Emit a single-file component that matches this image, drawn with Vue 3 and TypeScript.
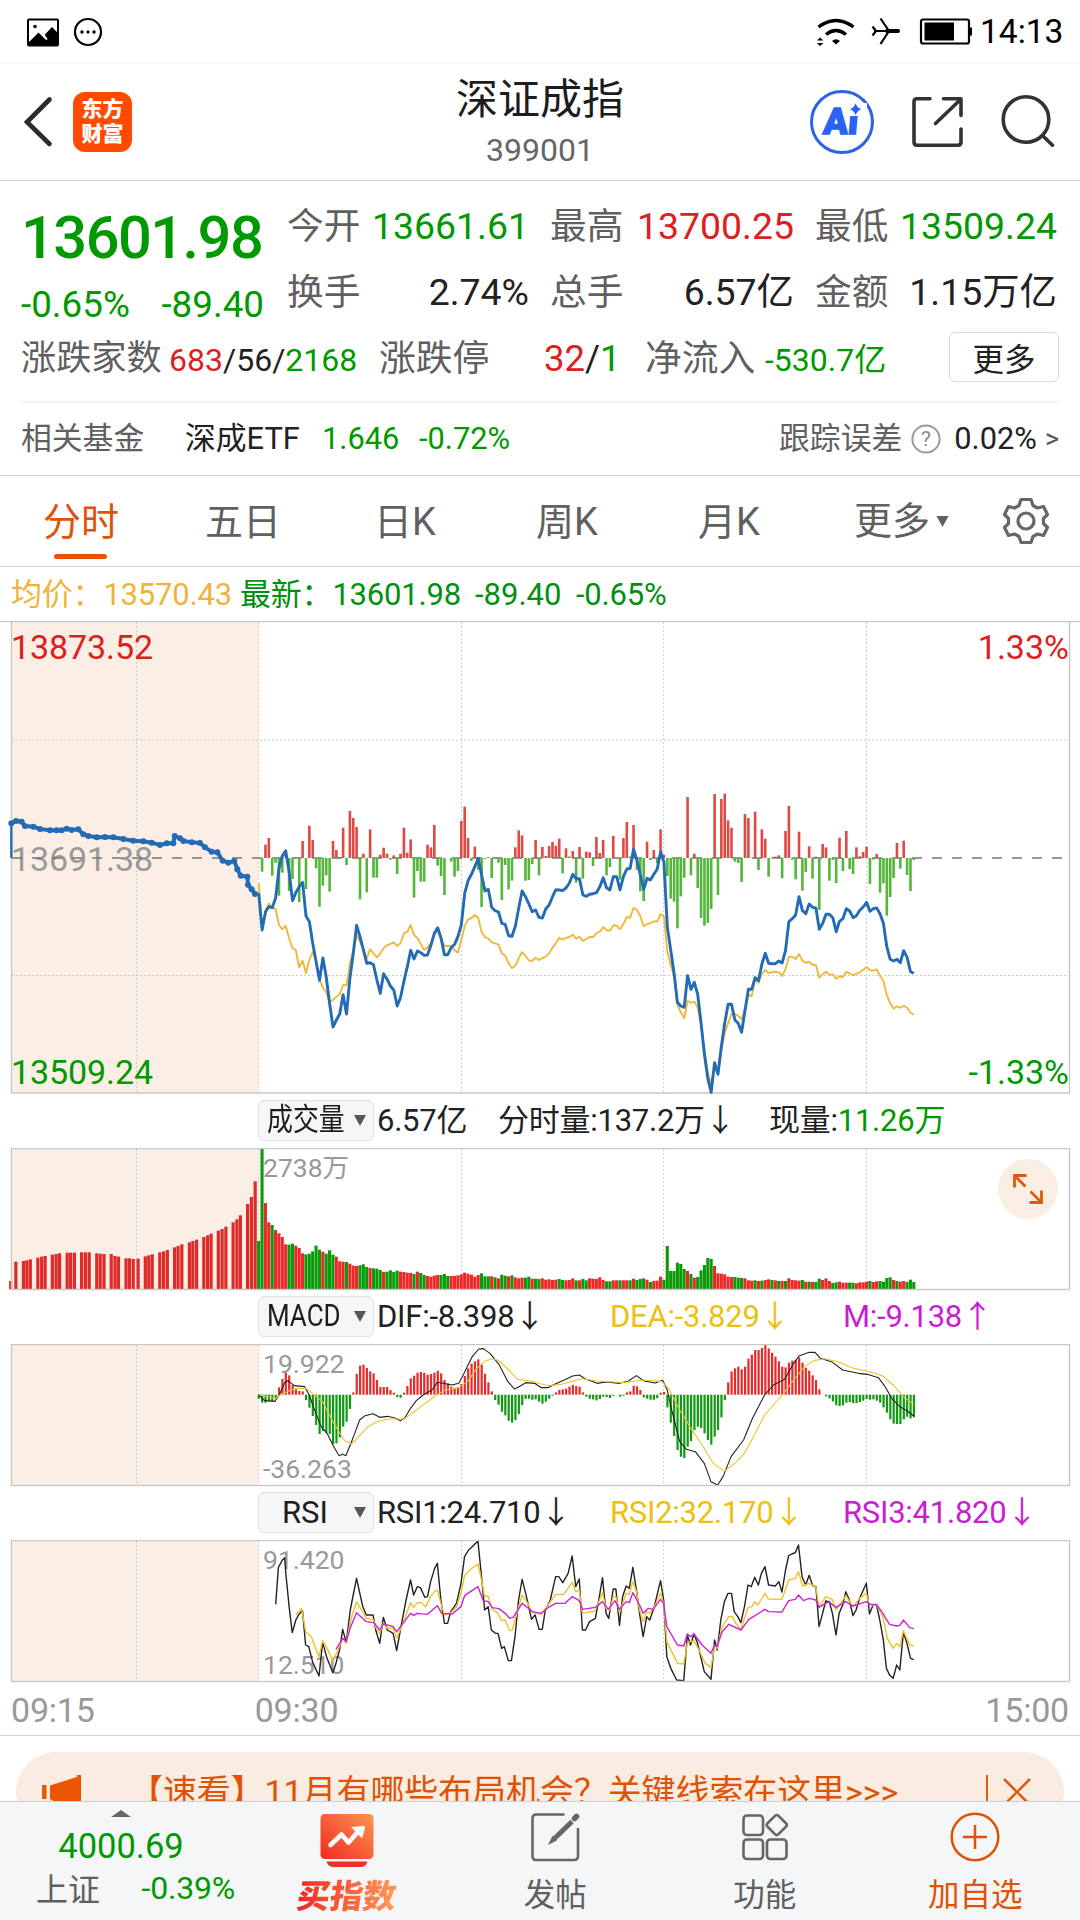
<script setup lang="ts">
interface Stat { label: string; value: string; tone: string }
interface Bar { x: number; y: number; h: number; tone: string }

const stats: Stat[] = [
  { label: '今开', value: '13661.61', tone: 'down' },
  { label: '最高', value: '13700.25', tone: 'up' },
  { label: '最低', value: '13509.24', tone: 'down' },
  { label: '换手', value: '2.74%', tone: 'ink' },
  { label: '总手', value: '6.57亿', tone: 'ink' },
  { label: '金额', value: '1.15万亿', tone: 'ink' },
]
const tabs = ['分时', '五日', '日K', '周K', '月K']

// One trading minute is STEP px wide; the session opens at OPEN_X.
const OPEN_X = 258.7
const STEP = 3.377
const gridX = [136.5, 258.7, 461.4, 663.6, 866.4]
const minuteX = (i: number): number => OPEN_X + i * STEP
const nums = (s: string): number[] => s.trim().split(/\s+/).map(Number)

// Price curves, in thirds of a pixel below y = 760.
const price = nums(`400 510 455 440 443 415 325 288 272 335 422 398 380 367 468 485 550 605 661 594
650 730 801 780 762 704 762 655 580 496 530 570 610 608 614 660 700 641 657 678
690 738 713 664 620 571 597 573 578 586 585 556 520 503 535 584 584 563 553 530
495 400 362 343 320 295 345 393 388 442 452 456 490 493 527 529 498 445 393 410
432 455 450 472 474 447 435 410 389 390 392 384 369 343 356 356 405 409 403 401
398 380 353 383 390 350 350 390 350 327 325 268 300 345 388 355 360 343 328 275
305 500 570 640 727 738 742 647 688 667 703 790 885 955 997 908 943 860 790 733
733 780 790 817 752 688 688 653 662 612 580 610 611 611 603 609 572 485 476 465
410 452 461 432 442 444 508 490 463 463 473 515 484 476 446 453 473 467 451 441
427 454 446 444 462 490 560 598 603 598 608 572 592 635 640`)
const average = nums(`368 505 455 431 443 447 495 508 497 535 565 570 622 602 640 598 577 600 660 683
697 725 720 710 703 675 676 610 570 525 545 568 595 568 580 592 580 565 556 552
547 558 550 520 515 495 525 534 552 570 562 550 525 510 535 558 558 558 570 578
540 498 478 474 465 474 515 532 535 547 550 554 580 587 610 624 617 595 576 588
601 603 593 600 594 590 580 563 550 533 539 534 531 524 536 530 543 537 531 531
520 515 502 510 512 496 497 508 492 471 473 443 450 468 499 493 489 484 485 462
470 575 615 650 735 757 775 722 728 725 742 800 870 940 970 915 940 870 820 790
762 762 767 778 745 705 708 660 668 642 630 639 637 635 637 648 628 590 590 597
582 602 608 606 614 615 653 643 635 644 643 656 649 651 635 640 646 641 637 629
621 630 632 628 648 662 705 730 746 739 743 737 743 758 764`)
const toLine = (ys: number[]): string =>
  ys.map((y, i) => `${minuteX(i).toFixed(1)},${(760 + y / 3).toFixed(1)}`).join(' ')
const priceLine = toLine(price)
const averageLine = toLine(average)

const auction = '34,190 48,183 65,185 75,198 100,200 120,207 150,211 170,211 185,211 200,206 215,210 235,208 250,223 265,228 290,232 315,231 340,232 370,237 400,242 430,244 455,248 480,255 500,250 520,250 524,228 540,235 550,243 575,247 600,249 615,262 635,275 652,277 668,302 685,308 703,303 712,328 722,347 742,350 744,374 755,388 765,402'
const auctionDots = auction.split(' ').map(p => p.split(',').map(Number))

// Bars around a zero line: heights above (+) and below (−), thirds of a pixel.
const breadth = nums(`0 -41 40 60 -53 -14 -113 -44 20 -99 -63 2 -132 51 -93 97 54 -31 -146 -83
-52 -101 51 24 3 91 -21 141 120 93 -124 13 -103 86 -59 -59 10 31 13 -5
8 -48 13 91 16 56 -119 -39 -71 -71 40 32 99 -23 -54 -111 0 -11 -56 -39
111 154 60 -9 34 -35 -147 -3 2 -60 0 -14 -126 -21 -94 -68 32 83 68 -68
-66 -18 54 -52 33 6 36 48 37 58 -46 29 4 21 -74 33 -62 19 17 -24
63 15 54 -52 -27 66 0 -65 60 108 4 99 -36 -100 -129 49 -6 24 -16 86
10 -54 -122 -131 -211 -115 -59 183 -52 13 -90 -180 -203 -195 -153 192 -111 177 193 113
91 -11 -15 -72 132 120 1 139 -36 86 58 -56 2 4 8 -61 81 156 -5 -64
79 -98 -42 35 -62 4 -156 42 32 -68 -6 -75 61 -39 81 -33 -48 32 5 18
34 -78 -5 12 -104 -76 -173 -117 -60 45 -32 52 -51 -99 -6`)
const signedBars = (vals: number[], zero: number): Bar[] =>
  vals.map((v, i) => ({
    x: minuteX(i), y: v > 0 ? zero - v / 3 : zero, h: Math.abs(v) / 3, tone: v > 0 ? 'r' : 'g',
  }))
const breadthBars = signedBars(breadth, 858)

// Volume: "<offset><tone>" per minute, offset measured from the top of the pane.
const volume = `453g 177g 339r 397r 405g 420r 430r 441r 463r 464g 461g 467r 474r 490r 493g 491g 484g 467g 479g 485r
491g 481g 494g 500r 514r 515r 516g 521r 527r 528r 526g 523g 531g 534r 535g 536g 540g 546r 545g 541g
546g 542g 545r 546r 548r 549r 552g 545r 549g 555g 558r 560r 557r 555r 555g 552g 558g 558r 558r 556r
553r 548r 551r 554r 560r 555r 550g 559g 559g 559r 562g 565r 554g 557g 559r 556g 562r 565r 563r 563g
560g 566r 566g 567g 565r 569r 568r 570r 569r 567g 570g 571r 570r 565r 571g 571r 567g 571g 565r 566r
567r 562r 570r 574g 574g 571r 571r 571g 571r 571r 571g 566r 570g 567g 565g 569r 576g 573r 572r 560r
569g 468g 543g 543g 518g 522g 537g 543r 552g 563r 561g 541g 525g 504g 507g 528r 550r 551r 553r 560r
561r 561g 563g 564g 565r 571r 572r 571g 573r 572g 570r 568r 570g 571r 573g 573r 573g 565r 570r 571r
572r 570g 575r 575g 576r 576g 566g 570r 565r 573r 579g 577g 575r 578r 578r 578g 578g 580r 577r 577r
575r 573g 576r 574r 573g 575g 564g 562g 570r 573g 575r 573r 576g 569g 576g`
const volumeBars: Bar[] = volume.split(/\s+/).map((t, i) => {
  const v = parseInt(t, 10)
  return { x: minuteX(i), y: 1090 + v / 3, h: (598 - v) / 3, tone: t.slice(-1) }
})
const preVolume = '31,573 46,515 68,513 78,511 88,508 110,503 121,500 131,498 152,494 163,492 173,490 195,488 205,488 216,488 237,487 248,487 259,487 281,490 291,491 302,492 323,492 334,498 344,500 366,505 376,505 387,507 401,506 422,499 432,496 442,493 464,487 475,484 486,480 507,472 517,468 528,463 550,457 560,453 571,449 592,441 603,436 613,431 634,422 645,417 656,410 677,397 688,388 698,376 719,342 730,321 741,274'
const preBars: Bar[] = preVolume.split(' ').map(p => {
  const [x, v] = p.split(',').map(Number)
  return { x: x / 2.904, y: 1090 + v / 3, h: (598 - v) / 3, tone: 'r' }
})

const macd = nums(`-12 -24 -24 -19 -19 -11 22 47 66 58 29 16 11 10 -16 -39 -64 -91 -118 -109
-114 -118 -148 -146 -128 -96 -81 -43 7 62 87 90 80 70 64 44 23 23 23 14
6 -7 -9 6 26 49 57 66 68 66 60 62 66 72 64 44 34 24 19 22
32 56 79 93 100 106 90 63 37 10 -16 -30 -51 -62 -78 -84 -76 -58 -31 -13
-12 -15 -14 -21 -27 -21 -12 -3 7 14 16 18 24 29 26 24 7 -6 -12 -14
-17 -13 -6 -7 -10 -3 0 -6 -3 7 10 27 25 14 -8 -12 -15 -15 -10 6
8 -38 -84 -124 -166 -186 -190 -156 -139 -106 -96 -100 -116 -136 -150 -126 -106 -68 -16 37
70 79 84 76 84 108 120 134 134 140 150 139 126 114 100 84 82 96 102 104
112 96 81 72 58 44 16 0 -5 -11 -20 -32 -34 -32 -24 -22 -25 -25 -22 -18
-13 -15 -14 -18 -24 -38 -54 -74 -87 -88 -88 -74 -66 -71 -68`)
const macdBars = signedBars(macd, 1394.7)

const dif = '42,194 55,212 78,214 88,195 100,158 107,152 122,167 145,170 155,195 170,250 182,290 195,310 210,350 222,377 230,373 237,377 247,345 257,310 268,270 280,257 298,251 313,262 330,259 345,263 360,272 370,262 382,235 395,212 410,195 430,180 442,157 455,160 475,165 490,160 500,135 520,80 535,57 545,56 560,70 580,103 600,155 615,177 625,170 640,158 660,160 675,173 690,173 705,163 730,148 745,138 760,135 775,148 800,160 820,156 850,160 870,153 888,137 905,153 930,159 947,151 957,180 967,240 985,335 1000,358 1020,365 1040,400 1055,455 1070,465 1082,440 1100,380 1128,330 1148,265 1175,195 1195,165 1220,148 1240,100 1252,78 1275,67 1288,67 1300,85 1325,95 1350,120 1385,130 1405,133 1430,143 1445,170 1460,205 1478,230 1495,243 1509,258'
const dea = '42,194 80,206 90,195 110,182 128,175 148,175 165,193 185,215 210,280 235,333 250,342 262,325 285,292 305,276 330,267 368,267 385,250 410,225 440,195 460,180 490,173 510,155 530,115 550,92 565,87 578,90 600,117 622,148 650,153 690,167 720,163 765,146 800,153 860,158 905,150 945,155 960,175 985,240 1010,295 1035,345 1060,400 1085,424 1110,398 1130,370 1150,320 1175,255 1215,195 1240,150 1265,110 1285,92 1310,86 1340,95 1370,113 1410,125 1440,138 1465,168 1490,205 1509,222'
const rsi1 = '80,823 86,712 95,690 100,683 103,735 110,830 117,908 125,870 132,853 140,842 147,945 154,950 163,998 177,1038 185,937 195,985 208,1028 215,1000 223,960 230,898 238,938 247,840 261,745 275,830 283,855 298,855 304,900 313,940 321,862 330,900 343,910 351,962 362,880 372,810 382,750 389,795 397,770 404,773 414,802 420,800 427,755 436,715 442,700 450,810 458,880 465,880 472,845 485,820 495,760 503,680 512,660 520,650 533,633 541,740 548,840 556,830 563,900 572,910 578,910 586,955 592,950 601,992 608,992 616,920 624,810 632,748 640,790 653,868 661,855 670,898 677,898 684,840 695,810 707,740 714,740 723,758 735,730 744,678 752,770 760,747 767,900 774,900 783,875 796,865 805,800 812,743 820,850 826,865 836,777 842,777 850,886 857,800 865,768 872,775 880,712 888,780 895,850 903,920 911,860 918,870 928,830 942,752 949,810 956,980 965,1015 978,1050 994,1052 1002,915 1009,945 1017,912 1025,940 1040,1025 1055,1048 1063,930 1069,960 1077,870 1085,815 1093,790 1101,790 1107,845 1115,860 1122,878 1130,830 1138,765 1145,770 1153,742 1161,765 1168,730 1176,710 1184,765 1199,768 1207,755 1214,786 1222,720 1229,677 1236,672 1244,668 1251,645 1259,740 1267,765 1275,736 1283,768 1290,770 1297,890 1305,850 1312,813 1320,815 1327,850 1335,915 1342,850 1350,825 1357,785 1365,810 1373,857 1380,840 1388,805 1403,760 1410,852 1418,825 1426,825 1433,870 1441,930 1448,1015 1455,1035 1463,1045 1471,1005 1478,1020 1486,907 1494,940 1502,985 1509,989'
const rsi2 = '125,855 138,835 147,905 160,920 168,950 177,980 185,932 195,955 208,992 218,965 230,925 238,940 248,870 261,815 270,835 283,865 298,868 305,895 313,910 321,880 330,895 343,895 351,925 365,880 382,818 389,832 397,818 406,818 416,830 427,800 436,785 442,780 450,820 458,855 472,848 485,830 495,790 503,737 515,720 533,702 541,750 548,800 556,798 565,838 578,850 586,872 594,870 604,902 610,900 618,860 632,795 642,815 655,848 675,852 690,825 707,793 725,793 744,757 752,785 760,780 767,850 795,843 812,788 820,835 828,840 836,800 842,800 850,848 865,790 872,793 880,755 888,785 895,840 903,875 911,845 918,850 930,825 942,790 949,820 956,935 980,1000 994,1002 1002,940 1009,935 1017,932 1030,965 1042,1000 1055,1012 1063,950 1069,955 1080,890 1095,860 1103,860 1110,880 1122,898 1138,833 1147,830 1153,815 1160,825 1176,790 1184,807 1214,808 1229,750 1244,745 1251,725 1260,768 1275,760 1290,772 1297,832 1312,800 1327,808 1335,840 1357,797 1373,830 1388,805 1403,790 1410,825 1426,825 1440,860 1450,925 1463,955 1471,940 1478,950 1486,902 1500,945 1509,948'
const rsi3 = '215,958 230,925 238,935 248,890 261,848 283,875 300,878 313,900 321,882 343,890 351,905 365,880 382,850 389,856 397,850 420,853 442,827 452,850 475,852 495,830 503,797 533,770 545,812 556,815 565,833 580,836 594,850 604,865 612,862 632,820 655,845 675,850 690,833 707,820 728,820 744,800 760,812 767,838 796,832 812,815 825,838 840,812 850,838 865,815 872,818 880,788 895,825 903,850 915,835 925,838 942,808 949,820 956,890 980,945 994,948 1002,912 1009,920 1017,912 1035,945 1055,970 1063,945 1069,948 1080,905 1095,883 1122,900 1140,868 1176,838 1184,845 1214,846 1229,812 1244,808 1251,795 1262,812 1275,805 1290,810 1297,832 1318,815 1335,832 1357,815 1373,828 1403,815 1412,823 1426,823 1440,850 1455,883 1470,888 1478,886 1486,870 1500,893 1509,896'
const studySpace = 'translate(240 1330) scale(0.44643 0.33333)'
</script>

<template>
  <div class="page">
    <header class="status">
      <svg class="st-left" width="80" height="36" viewBox="24 14 80 36">
        <rect x="28" y="19.5" width="30" height="26" rx="1" fill="none" stroke="#000" stroke-width="2" />
        <circle cx="35" cy="26.5" r="1.8" />
        <path d="M28 45V43L38.500 32.500L46 40L44.500 35L52 27L58 33V45Z" />
        <path d="M43.500 34.500L47 39.500" stroke="#fff" stroke-width="1.600" />
        <circle cx="88" cy="32" r="13" fill="none" stroke="#000" stroke-width="2.2" />
        <circle cx="82" cy="32" r="1.700" /><circle cx="88" cy="32" r="1.700" /><circle cx="94" cy="32" r="1.700" />
      </svg>
      <svg class="st-right" width="160" height="36" viewBox="814 14 160 36">
        <g fill="none" stroke="#000" stroke-width="3.400">
          <path d="M818.500 27Q836 14 853.500 27" /><path d="M826 34.500Q836 26.500 846 34.500" />
        </g>
        <path d="M832 41Q836 37.500 840 41L836 44.500Z" />
        <path d="M817 40.500L820 37.500L823.500 40.500ZM817 43L820 46L823.500 43Z" />
        <path d="M880.500 18.500L889 31L880.500 44M874 31H889M872.500 26.500L876 31L872.500 35.500" fill="none" stroke="#000" stroke-width="2.200" />
        <path d="M887 31H898" fill="none" stroke="#000" stroke-width="4" stroke-linecap="round" />
        <rect x="921" y="19.500" width="48" height="24" rx="2" fill="none" stroke="#000" stroke-width="2.200" />
        <rect x="924.500" y="22.500" width="29.500" height="18" /><rect x="969" y="27.500" width="3" height="8" />
      </svg>
      <span class="clock">14:13</span>
    </header>

    <div class="titlebar">
      <svg class="back" width="32" height="52" viewBox="22 96 32 52"><path d="M49.500 99.500L27 122L49.500 144" fill="none" stroke="#2b2b2b" stroke-width="4.600" stroke-linecap="round" /></svg>
      <div class="logo"><span>东方</span><span>财富</span></div>
      <div class="title"><b>深证成指</b><small>399001</small></div>
      <svg class="tools" width="260" height="68" viewBox="806 88 260 68">
        <circle cx="842" cy="122" r="30.500" fill="#fff" stroke="#2e61e8" stroke-width="3" />
        <g transform="translate(822.500 134) skewX(-5)">
          <text class="ai" x="0" y="0">Ai</text>
        </g>
        <rect x="847" y="103" width="20" height="13" fill="#fff" />
        <path d="M855.600 103.200Q857 107.800 861.200 109.200Q857 110.600 855.600 115.200Q854.200 110.600 850 109.200Q854.200 107.800 855.600 103.200Z" fill="#2b62f5" />
        <g fill="none" stroke="#333" stroke-width="3.600" stroke-linecap="round" stroke-linejoin="round">
          <path d="M930 98.800H917Q914 98.800 914 102V142Q914 145.200 917 145.200H958Q961 145.200 961 142V129" />
          <path d="M943.500 98.800H961V115.500M960 100L935.500 123.500" />
          <circle cx="1026" cy="119.500" r="22.800" /><path d="M1043 136L1052.500 145.200" />
        </g>
      </svg>
    </div>

    <section class="quote">
      <div class="q-top">
        <div class="q-main">
          <div class="last">13601.98</div>
          <div class="chg"><span>-0.65%</span><span>-89.40</span></div>
        </div>
        <div class="q-grid">
          <div v-for="s in stats" :key="s.label" class="cell"><label>{{ s.label }}</label><span :class="s.tone">{{ s.value }}</span></div>
        </div>
      </div>
      <div class="q-row">
        <label class="w1">涨跌家数</label>
        <span class="w2"><i class="up">683</i>/56/<i class="down">2168</i></span>
        <label class="w3">涨跌停</label>
        <span class="w4"><i class="up">32</i>/<i class="down">1</i></span>
        <label class="w5">净流入</label>
        <span class="w6 down">-530.7亿</span>
        <button>更多</button>
      </div>
      <div class="funds">
        <span class="f1">相关基金</span><span class="f2">深成ETF</span><span class="f3">1.646</span><span class="f4">-0.72%</span>
        <span class="f5">跟踪误差</span>
        <svg width="30" height="30" viewBox="0 0 30 30"><circle cx="15" cy="15" r="13.600" fill="none" stroke="#999" stroke-width="2" /><text x="15" y="22" text-anchor="middle" class="q">?</text></svg>
        <span class="f6">0.02%</span><span class="f7">&gt;</span>
      </div>
    </section>

    <nav class="tabs">
      <div v-for="(t, i) in tabs" :key="t" class="tab" :class="{ on: i === 0 }">{{ t }}</div>
      <div class="tab more">更多<svg width="13" height="13" viewBox="0 0 13 13"><path d="M0.500 1H12.500L6.500 12Z" fill="#606060" /></svg></div>
      <svg class="gear" width="52" height="52" viewBox="-26 -26 52 52" fill="none" stroke="#666" stroke-width="3.200" stroke-linejoin="round">
        <path d="M-5 -21.500H5L7 -15.500L11.500 -13L17.500 -14.500L21.500 -6.500L17.500 -2.500V2.500L21.500 6.500L17.500 14.500L11.500 13L7 15.500L5 21.500H-5L-7 15.500L-11.500 13L-17.500 14.500L-21.500 6.500L-17.500 2.500V-2.500L-21.500 -6.500L-17.500 -14.500L-11.500 -13L-7 -15.500Z" />
        <circle r="8" />
      </svg>
    </nav>

    <div class="legend"><span class="avg">均价：13570.43</span><span class="l2">最新：13601.98</span><span class="l3">-89.40</span><span class="l4">-0.65%</span></div>

    <svg class="pane" width="1080" height="474" viewBox="0 621 1080 474">
      <rect x="11.500" y="622" width="247" height="471" fill="#fbeee4" />
      <path d="M11.500 622V1093H1069.500V622" class="frame" />
      <path d="M0 621.500H1080" class="frame" />
      <path v-for="x in gridX" :key="x" :d="`M${x} 622V1093`" class="grid" />
      <path d="M12 740.200H1069M12 975.500H1069" class="grid" />
      <text x="11" y="871" class="ax gray" textLength="142">13691.38</text>
      <path d="M12 858H1069" stroke="#777" stroke-width="1.600" stroke-dasharray="10 10" />
      <rect v-for="(b, i) in breadthBars" :key="i" :x="b.x - 1.3" :y="b.y" width="2.600" :height="b.h" :fill="b.tone === 'r' ? '#e04a45' : '#55b63c'" />
      <g transform="translate(0 760) scale(0.33333)" fill="none" stroke="#236bb5" stroke-linejoin="round">
        <path d="M34 294V190M765 402L776 400" stroke-width="7" />
        <polyline :points="auction" stroke-width="12" />
        <circle v-for="(d, i) in auctionDots" :key="i" :cx="d[0]" :cy="d[1]" r="9" fill="#236bb5" stroke="none" />
      </g>
      <polyline :points="averageLine" fill="none" stroke="#efb93c" stroke-width="1.900" stroke-linejoin="round" />
      <polyline :points="priceLine" fill="none" stroke="#236bb5" stroke-width="2.900" stroke-linejoin="round" />
      <text x="11" y="659" class="ax up" textLength="142">13873.52</text>
      <text x="11" y="1084" class="ax down" textLength="142">13509.24</text>
      <text x="1069" y="659" class="ax up" text-anchor="end">1.33%</text>
      <text x="1069" y="1084" class="ax down" text-anchor="end">-1.33%</text>
    </svg>

    <div class="study">
      <div class="pick"><span class="squeeze">成交量</span><svg width="12" height="11" viewBox="0 0 12 11"><path d="M0 0H12L6 11Z" fill="#555" /></svg></div>
      <span class="c1v">6.57亿</span><span class="c2v">分时量:137.2万↓</span><span>现量:<i class="down">11.26万</i></span>
    </div>
    <div class="pane-box">
      <svg class="pane" width="1080" height="143" viewBox="0 1148 1080 143">
        <rect x="11.500" y="1148.500" width="247" height="141" fill="#fbeee4" />
        <path v-for="x in gridX" :key="x" :d="`M${x} 1149V1289`" class="grid" />
        <text x="263" y="1177" class="sm">2738万</text>
        <rect v-for="(b, i) in preBars" :key="'p' + i" :x="b.x - 1.6" :y="b.y" width="3.200" :height="b.h" fill="#dc2b28" />
        <rect v-for="(b, i) in volumeBars" :key="i" :x="b.x - 1.6" :y="b.y" width="3.100" :height="b.h" :fill="b.tone === 'r' ? '#ec2828' : '#0a9a0a'" />
        <rect x="11.500" y="1148.500" width="1058" height="141" class="frame" />
      </svg>
      <svg class="expand" width="60" height="60" viewBox="0 0 60 60">
        <circle cx="30" cy="30" r="30" fill="#faeee3" />
        <g fill="none" stroke="#e05a0e" stroke-width="2.800"><path d="M16.500 28.500V16.500H28.500M17 17L27.500 27.500" /><path d="M43.500 31.500V43.500H31.500M43 43L32.500 32.500" /></g>
      </svg>
    </div>

    <div class="study">
      <div class="pick"><span class="squeeze">MACD</span><svg width="12" height="11" viewBox="0 0 12 11"><path d="M0 0H12L6 11Z" fill="#555" /></svg></div>
      <span class="c1">DIF:-8.398↓</span><span class="c2 yel">DEA:-3.829↓</span><span class="mag">M:-9.138↑</span>
    </div>
    <svg class="pane" width="1080" height="143" viewBox="0 1344 1080 143">
      <rect x="11.500" y="1344.500" width="247" height="141" fill="#fbeee4" />
      <path v-for="x in gridX" :key="x" :d="`M${x} 1345V1485`" class="grid" />
      <text x="263" y="1373" class="sm">19.922</text><text x="263" y="1478" class="sm">-36.263</text>
      <rect v-for="(b, i) in macdBars" :key="i" :x="b.x - 1" :y="b.y" width="2.200" :height="b.h" :fill="b.tone === 'r' ? '#e62a2a' : '#0f9a12'" />
      <g :transform="studySpace" fill="none" stroke-linejoin="round">
        <polyline :points="dif" stroke="#222" class="thin" /><polyline :points="dea" stroke="#eec32a" class="thin" />
      </g>
      <rect x="11.500" y="1344.500" width="1058" height="141" class="frame" />
    </svg>

    <div class="study">
      <div class="pick rsi"><span>RSI</span><svg width="12" height="11" viewBox="0 0 12 11"><path d="M0 0H12L6 11Z" fill="#555" /></svg></div>
      <span class="c1">RSI1:24.710↓</span><span class="c2 yel">RSI2:32.170↓</span><span class="mag">RSI3:41.820↓</span>
    </div>
    <svg class="pane" width="1080" height="143" viewBox="0 1540 1080 143">
      <rect x="11.500" y="1540.500" width="247" height="141" fill="#fbeee4" />
      <path v-for="x in gridX" :key="x" :d="`M${x} 1541V1681`" class="grid" />
      <text x="263" y="1569" class="sm">91.420</text><text x="263" y="1674" class="sm">12.510</text>
      <g :transform="studySpace" fill="none" stroke-linejoin="round">
        <polyline :points="rsi1" stroke="#222" class="line" /><polyline :points="rsi2" stroke="#eec32a" class="line" /><polyline :points="rsi3" stroke="#d022d6" class="line" />
      </g>
      <rect x="11.500" y="1540.500" width="1058" height="141" class="frame" />
    </svg>
    <div class="times"><span>09:15</span><span class="t2">09:30</span><span class="t3">15:00</span></div>

    <div class="promo-area">
      <div class="promo">
        <svg class="horn" width="42" height="46" viewBox="40 1774 42 46"><path d="M42 1785H46.500V1799H42ZM50 1785.500L77 1777V1775H81V1815H77L50 1799Z" fill="#ea5504" /></svg>
        <span class="promo-text">【速看】11月有哪些布局机会？关键线索在这里&gt;&gt;&gt;</span>
        <i class="bar"></i>
        <svg width="30" height="30" viewBox="0 0 30 30"><path d="M2 2L28 28M28 2L2 28" stroke="#e05a0e" stroke-width="2.600" /></svg>
      </div>
    </div>

    <footer class="dock">
      <div class="index">
        <svg width="20" height="7" viewBox="0 0 20 7"><path d="M0 7L10 0L20 7Z" fill="#666" /></svg>
        <div class="i-val">4000.69</div>
        <div class="i-row"><span>上证</span><span class="down">-0.39%</span></div>
      </div>
      <div class="act buy">
        <svg width="54" height="54" viewBox="0 0 54 54">
          <defs><linearGradient id="hot" x1="0" y1="1" x2="1" y2="0"><stop offset="0" stop-color="#f02a20" /><stop offset="1" stop-color="#ff9650" /></linearGradient></defs>
          <rect x="0.500" y="0" width="53" height="45" rx="4.500" fill="url(#hot)" />
          <path d="M6.500 47.500H47.500Q46 53 40 53H14Q8 53 6.500 47.500Z" fill="#ec3223" />
          <path d="M10.500 31L21.500 20.500L28.500 28.500L40 15.500" fill="none" stroke="#fff" stroke-width="4.600" stroke-linecap="round" stroke-linejoin="round" />
          <path d="M31 13L43.500 12Q45.500 12 45 14L42 24.500Z" fill="#fff" />
        </svg>
        <strong>买指数</strong>
      </div>
      <div class="act">
        <svg width="50" height="50" viewBox="0 0 50 50" fill="none" stroke="#666" stroke-width="2.600">
          <path d="M34.500 2.500H6Q2.500 2.500 2.500 6.500V44Q2.500 48 6 48H44Q48 48 48 44V16" />
          <path d="M42 9.500L25 26" stroke-width="5" /><path d="M46.500 4.500L44.500 6.500" stroke-width="5.500" stroke-linecap="round" />
          <path d="M22.800 24L27 28L18.500 32.500Z" fill="#666" stroke-width="0.600" />
        </svg>
        <span>发帖</span>
      </div>
      <div class="act">
        <svg width="48" height="48" viewBox="0 0 48 48" fill="none" stroke="#666" stroke-width="2.600">
          <rect x="2.500" y="2.500" width="19.500" height="19.500" rx="3.500" /><rect x="2.500" y="26.500" width="19.500" height="19.500" rx="3.500" /><rect x="26" y="26.500" width="19.500" height="19.500" rx="3.500" />
          <rect x="28" y="4.250" width="15.500" height="15.500" rx="2.500" transform="rotate(45 35.750 12)" />
        </svg>
        <span>功能</span>
      </div>
      <div class="act add">
        <svg width="50" height="50" viewBox="0 0 50 50" fill="none" stroke="#e05206" stroke-width="2.500"><circle cx="25" cy="25" r="23.300" /><path d="M25 13V37M13 25H37" /></svg>
        <span>加自选</span>
      </div>
    </footer>
  </div>
</template>

<style>
body { margin: 0; background: #fff; }
</style>
<style scoped>
.page { width: 1080px; height: 1920px; overflow: hidden; background: #fff; font-family: Roboto, "Noto Sans CJK SC", sans-serif; color: #222; line-height: 1; display: flex; flex-direction: column; }
.page > * { flex: none; box-sizing: border-box; }
span, label, small, b, strong { white-space: nowrap; }
i { font-style: normal; }
svg { display: block; flex: none; }
.up { color: #dc2020; fill: #dc2020; }
.down { color: #009900; fill: #009900; }
.ink { color: #222; }
.status { height: 64px; display: flex; align-items: center; padding-left: 24px; border-bottom: 1px solid #f7fbfa; }
.st-left { margin-right: 710px; }
.clock { font-size: 33.500px; color: #000; margin-left: 6px; }
.titlebar { height: 117px; display: grid; grid-template-columns: 51px 209px 1fr 260px; align-items: center; padding: 0 14px 0 22px; border-bottom: 1px solid #cbd3d6; }
.logo { width: 59px; height: 60px; border-radius: 12px; background: #ff4a00; color: #fff; font-weight: 900; font-size: 21px; line-height: 25px; display: flex; flex-direction: column; align-items: center; justify-content: center; }
.title { width: 516px; display: flex; flex-direction: column; align-items: center; }
.title b { font-weight: 400; font-size: 42px; color: #1c1c1c; margin-bottom: 13px; }
.title small { font-size: 32px; color: #666; }
.tools { position: relative; }
.ai { font: 900 36.500px Roboto, sans-serif; fill: #2b62f5; stroke: #2b62f5; stroke-width: 1.4; }
.quote { height: 295px; border-bottom: 1px solid #cbd3d6; padding: 19px 21px 0; }
.q-top { display: flex; height: 132px; }
.q-main { width: 267px; }
.last { font-size: 59.500px; font-weight: 500; color: #009900; height: 76px; line-height: 76px; letter-spacing: -1.5px; }
.chg { height: 58px; display: flex; align-items: center; justify-content: space-between; width: 243px; font-size: 36.800px; color: #009900; }
.q-grid { display: grid; grid-template-columns: 241px 243px 241px; column-gap: 22px; grid-auto-rows: 66px; margin-top: -6px; }
.cell { display: flex; align-items: center; justify-content: space-between; font-size: 37.400px; }
.cell label { color: #606060; font-size: 36.700px; margin-left: -1px; }
.q-row { display: flex; align-items: center; height: 52px; font-size: 32px; margin-bottom: 17px; padding-top: 1px; box-sizing: border-box; }
.q-row label { color: #606060; margin-top: 1px; }
.w1 { font-size: 35.200px; width: 148px; }
.w2 { width: 210px; margin-top: 2px; }
.w3, .w5 { font-size: 36.800px; }
.w3 { width: 165px; }
.w4 { font-size: 36.500px; width: 101px; margin-top: 2px; }
.w5 { width: 120px; }
.w6 { flex: 1; font-size: 32px; margin-top: 2px; }
button { width: 110px; height: 50px; border: 1.500px solid #d5dcdf; border-radius: 6px; background: #fff; font: 31.500px "Noto Sans CJK SC", sans-serif; color: #222; padding: 0; line-height: 40px; margin-top: -3px; }
.funds { border-top: 2px solid #f2f3f3; height: 72px; display: flex; align-items: center; font-size: 30.800px; color: #222; }
.f1, .f5 { color: #606060; }
.f1 { width: 164px; } .f2 { width: 137px; } .f3 { width: 97px; color: #009900; } .f4 { flex: 1; color: #009900; }
.f5 { margin-right: 9px; } .f6 { margin-left: 13px; } .f7 { margin-left: 8px; font-size: 27px; color: #555; }
.q { font: 21px Roboto, sans-serif; fill: #8c8c8c; }
.tabs { height: 91px; border-bottom: 1px solid #cbd3d6; display: flex; align-items: center; }
.tab { width: 162px; height: 90px; line-height: 92px; text-align: center; font-size: 38px; color: #606060; }
.on { color: #e05206; position: relative; }
.on::after { content: ""; position: absolute; left: 54px; bottom: 7px; width: 53px; height: 5px; border-radius: 3px; background: #e85500; }
.more { display: flex; align-items: center; justify-content: center; gap: 6px; width: 183px; }
.gear { margin-left: 7px; }
.more + .gear { margin-left: 7px; }
.legend { height: 54px; display: flex; align-items: center; padding-left: 11px; font-size: 31px; color: #009010; }
.avg { color: #eeb43a; width: 229px; letter-spacing: -.2px; } .l2 { width: 235px; letter-spacing: -.2px; } .l3 { width: 101px; } .l4 { letter-spacing: -.2px; }
.frame { fill: none; stroke: #c8c8c8; stroke-width: 1.4; }
.grid { fill: none; stroke: #cdcdcd; stroke-width: 1; stroke-dasharray: 2 2; }
.ax { font: 34px Roboto, sans-serif; }
.gray { fill: #999; }
.sm { font: 26.500px Roboto, "Noto Sans CJK SC", sans-serif; fill: #999; }
.thin { stroke-width: 1.1; vector-effect: non-scaling-stroke; }
.line { stroke-width: 1.4; vector-effect: non-scaling-stroke; }
.study { height: 53px; display: flex; align-items: center; padding-left: 258px; font-size: 31px; letter-spacing: -.25px; padding-bottom: 3px; }
.pick { box-sizing: border-box; width: 115.500px; height: 41px; margin-right: 3.500px; border: 1px solid #dde3e5; border-radius: 6px; background: #f4f6f8; display: flex; align-items: center; justify-content: space-between; padding: 0 7px 0 8px; color: #1c1c1c; letter-spacing: 0; }
.squeeze { font-size: 30.500px; transform: scaleX(.85); transform-origin: 0 50%; width: 76px; }
.rsi { padding-left: 23px; }
.c1 { width: 233px; } .c2 { width: 233px; } .c1v { width: 121px; } .c2v { width: 271px; }
.yel { color: #edc010; } .mag { color: #c81ed2; }
.pane-box { position: relative; }
.expand { position: absolute; left: 998px; top: 11px; }
.times { height: 53px; display: flex; align-items: center; font-size: 34px; color: #999; padding: 2px 11px 0; border-bottom: 1px solid #cbd3d6; letter-spacing: -.2px; }
.t2 { margin-left: 160px; } .t3 { margin-left: auto; }
.promo-area { height: 65px; padding: 16px 16px 0; overflow: hidden; }
.promo { height: 80px; border-radius: 40px; background: #faece0; display: flex; align-items: center; color: #e05206; padding-left: 24px; }
.horn { margin-right: 47px; margin-top: 9px; }
.promo-text { font-size: 34px; letter-spacing: -.1px; width: 857px; }
.bar { width: 2px; height: 34px; background: #e05a0e; margin-right: 14px; }
.dock { height: 119px; background: #f5f6f8; border-top: 1px solid #c8d2d8; display: flex; }
.index { width: 242px; padding-top: 8px; display: flex; flex-direction: column; align-items: center; }
.i-val { font-size: 34.500px; color: #009900; margin: 12px 0 10px; }
.i-row { display: flex; justify-content: space-between; width: 199px; font-size: 32px; color: #606060; margin-left: 29px; }
.i-row .down { margin-top: -2px; letter-spacing: -.2px; }
.act { width: 209.500px; display: flex; flex-direction: column; align-items: center; color: #606060; font-size: 31.500px; padding-top: 10px; box-sizing: border-box; }
.act svg { height: 50px; margin-bottom: 18px; }
.act.buy svg { height: 54px; margin-bottom: 11px; margin-top: 2px; }
.act:nth-child(3), .act:nth-child(4) { padding-right: 2px; }
.buy strong { font-size: 33px; font-weight: 900; transform: skewX(-8deg); background: linear-gradient(90deg, #ee2a20, #ff9a58); -webkit-background-clip: text; background-clip: text; color: transparent; line-height: 1.1; }
.add { color: #e05206; }
</style>
